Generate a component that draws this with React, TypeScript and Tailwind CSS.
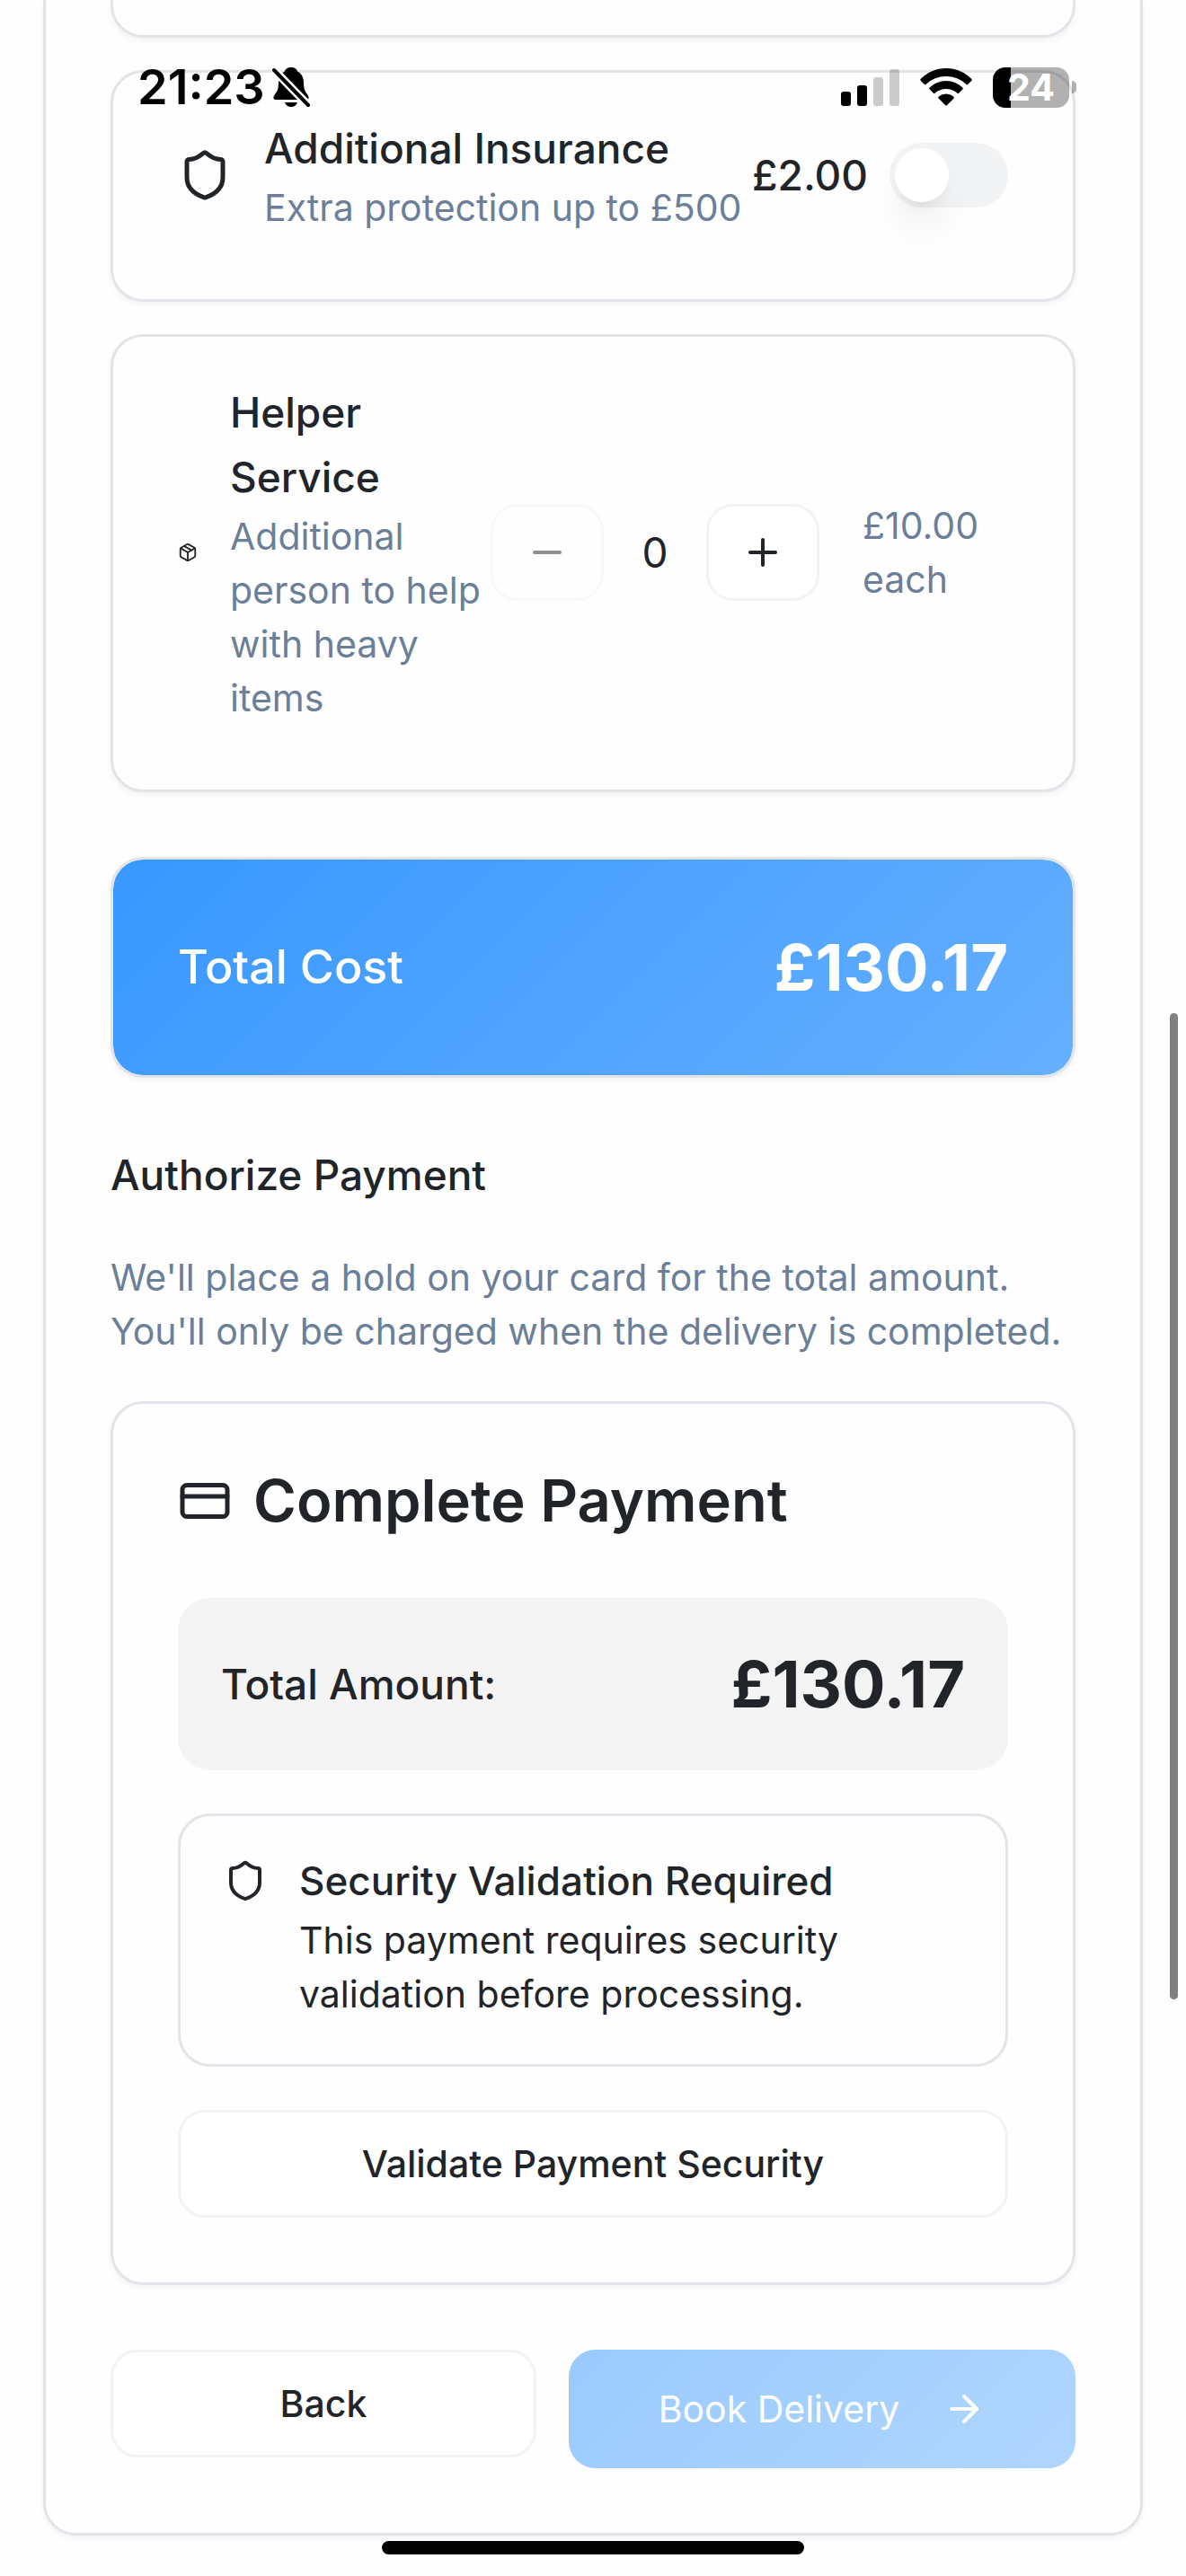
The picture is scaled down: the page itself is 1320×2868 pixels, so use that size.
import { useState } from "react";
import type { ReactNode } from "react";
import { ArrowRight, CreditCard, Minus, Package, Plus, Shield } from "lucide-react";

function Card({ children, className = "" }: { children?: ReactNode; className?: string }) {
  return (
    <section
      className={`rounded-[36px] border-[3px] border-[#e3e4ea] shadow-[0_3px_6px_rgba(0,0,0,0.05)] ${className}`}
    >
      {children}
    </section>
  );
}

function StatusBar() {
  return (
    <header className="pointer-events-none absolute inset-x-0 top-0 flex h-[194px] items-center justify-between pr-[122px] pb-0 pl-[153px] text-black">
      <div className="flex items-center gap-2">
        <span className="text-[54px] leading-[60px] font-semibold">21:23</span>
        <svg aria-label="Silent mode" viewBox="0 0 42 46" className="h-[46px] w-[42px]">
          <path
            d="M21 1c-4 0-6.500 2-7 4.500C9 8 7 13 7 18c0 7-1.500 10-4 13-2 2.500-2.500 6 1 6h34c3.500 0 3-3.500 1-6-2.500-3-4-6-4-13 0-5-2-10-7-12.500C27.500 3 25 1 21 1z"
            fill="currentColor"
          />
          <path d="M14 40h14c-1 3-3.500 5-7 5s-6-2-7-5z" fill="currentColor" />
          <path d="M2 4l38 39" stroke="#fff" strokeWidth="9" />
          <path d="M2 4l38 39" stroke="currentColor" strokeWidth="4" strokeLinecap="round" />
        </svg>
      </div>
      <div className="flex items-center gap-[23px]">
        <svg aria-label="Signal" viewBox="0 0 65 42" className="h-[42px] w-[65px]" fill="currentColor">
          <rect x="0" y="26" width="11" height="16" rx="3" />
          <rect x="18" y="19" width="11" height="23" rx="3" />
          <rect x="36" y="10" width="11" height="32" rx="3" opacity="0.2" />
          <rect x="54" y="1" width="11" height="41" rx="3" opacity="0.2" />
        </svg>
        <svg aria-label="Wi-Fi" viewBox="0 0 58 42" className="h-[42px] w-[58px]" fill="currentColor">
          <path d="M29 0C18 0 8 4.500 0.800 11.800a1.500 1.500 0 0 0 0 2.100l3.800 3.900a1.500 1.500 0 0 0 2.100 0A32 32 0 0 1 29 9a32 32 0 0 1 22.300 8.800 1.500 1.500 0 0 0 2.100 0l3.800-3.900a1.500 1.500 0 0 0 0-2.100C50 4.500 40 0 29 0z" />
          <path d="M29 14a27 27 0 0 0-18.300 7.400 1.500 1.500 0 0 0 0 2.200l4 4a1.500 1.500 0 0 0 2.100 0A18 18 0 0 1 29 23a18 18 0 0 1 12.200 4.600 1.500 1.500 0 0 0 2.100 0l4-4a1.500 1.500 0 0 0 0-2.200A27 27 0 0 0 29 14z" />
          <path d="M29 28.500a13 13 0 0 0-8.200 3 1.500 1.500 0 0 0 0 2.200L28 41a1.500 1.500 0 0 0 2.100 0l7.200-7.300a1.500 1.500 0 0 0 0-2.200 13 13 0 0 0-8.300-3z" />
        </svg>
        <div className="flex items-center gap-[3px]">
          <div className="flex h-[45px] w-[85px] items-center justify-center rounded-[14px] bg-[linear-gradient(to_right,#000_20px,rgba(0,0,0,0.3)_20px)] text-[41px] leading-[45px] font-bold text-white">
            24
          </div>
          <div className="h-[14px] w-[5px] rounded-r-full bg-black/30" />
        </div>
      </div>
    </header>
  );
}

const outline = "rounded-[30px] border-[3px] border-[#f2f3f5] bg-white";

export default function App() {
  const [insured, setInsured] = useState(false);
  const [helpers, setHelpers] = useState(0);

  return (
    <div className="relative bg-[#fefefe] px-12 pb-[45px] font-['Inter',sans-serif] text-[46px] leading-[72px] text-[#212529]">
      <main className="rounded-b-[36px] border-x-[3px] border-b-[3px] border-[#e3e4ea] px-[72px] pb-[72px] shadow-[0_3px_6px_rgba(0,0,0,0.05)]">
        <div className="h-[42px] rounded-b-[36px] border-x-[3px] border-b-[3px] border-[#e3e4ea] shadow-[0_3px_6px_rgba(0,0,0,0.05)]" />

        <Card className="mt-9 flex items-center justify-between px-[72px] pt-12 pb-[72px]">
          <div className="flex items-center gap-9">
            <Shield className="size-[60px] shrink-0" />
            <div className="whitespace-nowrap">
              <label htmlFor="insurance" className="block font-medium">
                Additional Insurance
              </label>
              <p className="text-[41px] leading-[60px] text-[#6b7f99]">Extra protection up to £500</p>
            </div>
          </div>
          <div className="flex items-center gap-6">
            <span className="font-medium">£2.00</span>
            <button
              id="insurance"
              type="button"
              role="switch"
              aria-checked={insured}
              onClick={() => setInsured(!insured)}
              className="flex h-[72px] w-[132px] shrink-0 items-center rounded-full bg-[#f2f3f5] p-[6px] aria-checked:justify-end aria-checked:bg-[#3898ff]"
            >
              <span className="size-[60px] rounded-full bg-white shadow-[0_30px_45px_-9px_rgba(0,0,0,0.1),0_12px_18px_-12px_rgba(0,0,0,0.1)]" />
            </button>
          </div>
        </Card>

        <Card className="mt-9 flex items-center px-[72px] pt-12 pb-[72px]">
          <Package className="mr-9 size-[22px] shrink-0" />
          <div className="min-w-0 flex-1">
            <h3 className="font-medium">Helper Service</h3>
            <p className="text-[41px] leading-[60px] text-[#6b7f99]">Additional person to help with heavy items</p>
          </div>
          <div className="flex items-center">
            <button
              type="button"
              aria-label="Remove helper"
              disabled={helpers === 0}
              onClick={() => setHelpers(helpers - 1)}
              className={`flex h-[108px] w-[126px] items-center justify-center disabled:opacity-50 ${outline}`}
            >
              <Minus className="size-12" />
            </button>
            <output className="w-[114px] text-center">{helpers}</output>
            <button
              type="button"
              aria-label="Add helper"
              onClick={() => setHelpers(helpers + 1)}
              className={`flex h-[108px] w-[126px] items-center justify-center ${outline}`}
            >
              <Plus className="size-12" />
            </button>
            <span className="ml-12 w-[162px] text-[41px] leading-[60px] text-[#6b7f99]">£10.00 each</span>
          </div>
        </Card>

        <Card className="mt-[72px] flex items-center justify-between bg-[linear-gradient(135deg,#3898ff,#65afff)] bg-clip-padding p-[72px] text-white">
          <span className="text-[52px] font-medium">Total Cost</span>
          <span className="text-[72px] leading-[96px] font-bold">£130.17</span>
        </Card>

        <h2 className="mt-[72px] font-medium">Authorize Payment</h2>
        <p className="mt-12 text-[41px] leading-[60px] text-[#6b7f99]">
          We'll place a hold on your card for the total amount. You'll only be charged when the delivery is completed.
        </p>

        <Card className="mt-12 p-[72px]">
          <h2 className="flex items-center gap-6 text-[65px] font-semibold">
            <CreditCard className="size-[60px]" />
            Complete Payment
          </h2>
          <div className="mt-[72px] flex items-center justify-between rounded-[36px] bg-[#f4f4f4] p-12">
            <span className="font-medium">Total Amount:</span>
            <span className="text-[72px] leading-[96px] font-bold">£130.17</span>
          </div>
          <div role="alert" className="mt-12 flex gap-9 rounded-[36px] border-[3px] border-[#e3e4ea] p-12">
            <Shield className="size-12 shrink-0" />
            <div>
              <h3 className="text-[44px] leading-[48px] font-medium">Security Validation Required</h3>
              <p className="mt-3 text-[41px] leading-[60px]">This payment requires security validation before processing.</p>
            </div>
          </div>
          <button type="button" className={`mt-12 h-[120px] w-full text-[41px] leading-[60px] font-medium ${outline}`}>
            Validate Payment Security
          </button>
        </Card>

        <div className="mt-[72px] grid grid-cols-[474fr_564fr] items-start gap-9 text-[41px] leading-[60px]">
          <button type="button" className={`h-[120px] font-medium ${outline}`}>
            Back
          </button>
          <button
            type="button"
            disabled
            className="flex h-[132px] items-center justify-center gap-12 rounded-[30px] bg-[linear-gradient(135deg,#3898ff,#65afff)] text-white opacity-50"
          >
            Book Delivery
            <ArrowRight className="size-12" />
          </button>
        </div>
      </main>

      <StatusBar />
      <div className="absolute top-[1128px] right-[9px] h-[1098px] w-[9px] rounded-full bg-[#808080]" />
      <div className="absolute bottom-6 left-1/2 h-[15px] w-[470px] -translate-x-1/2 rounded-full bg-black" />
    </div>
  );
}
